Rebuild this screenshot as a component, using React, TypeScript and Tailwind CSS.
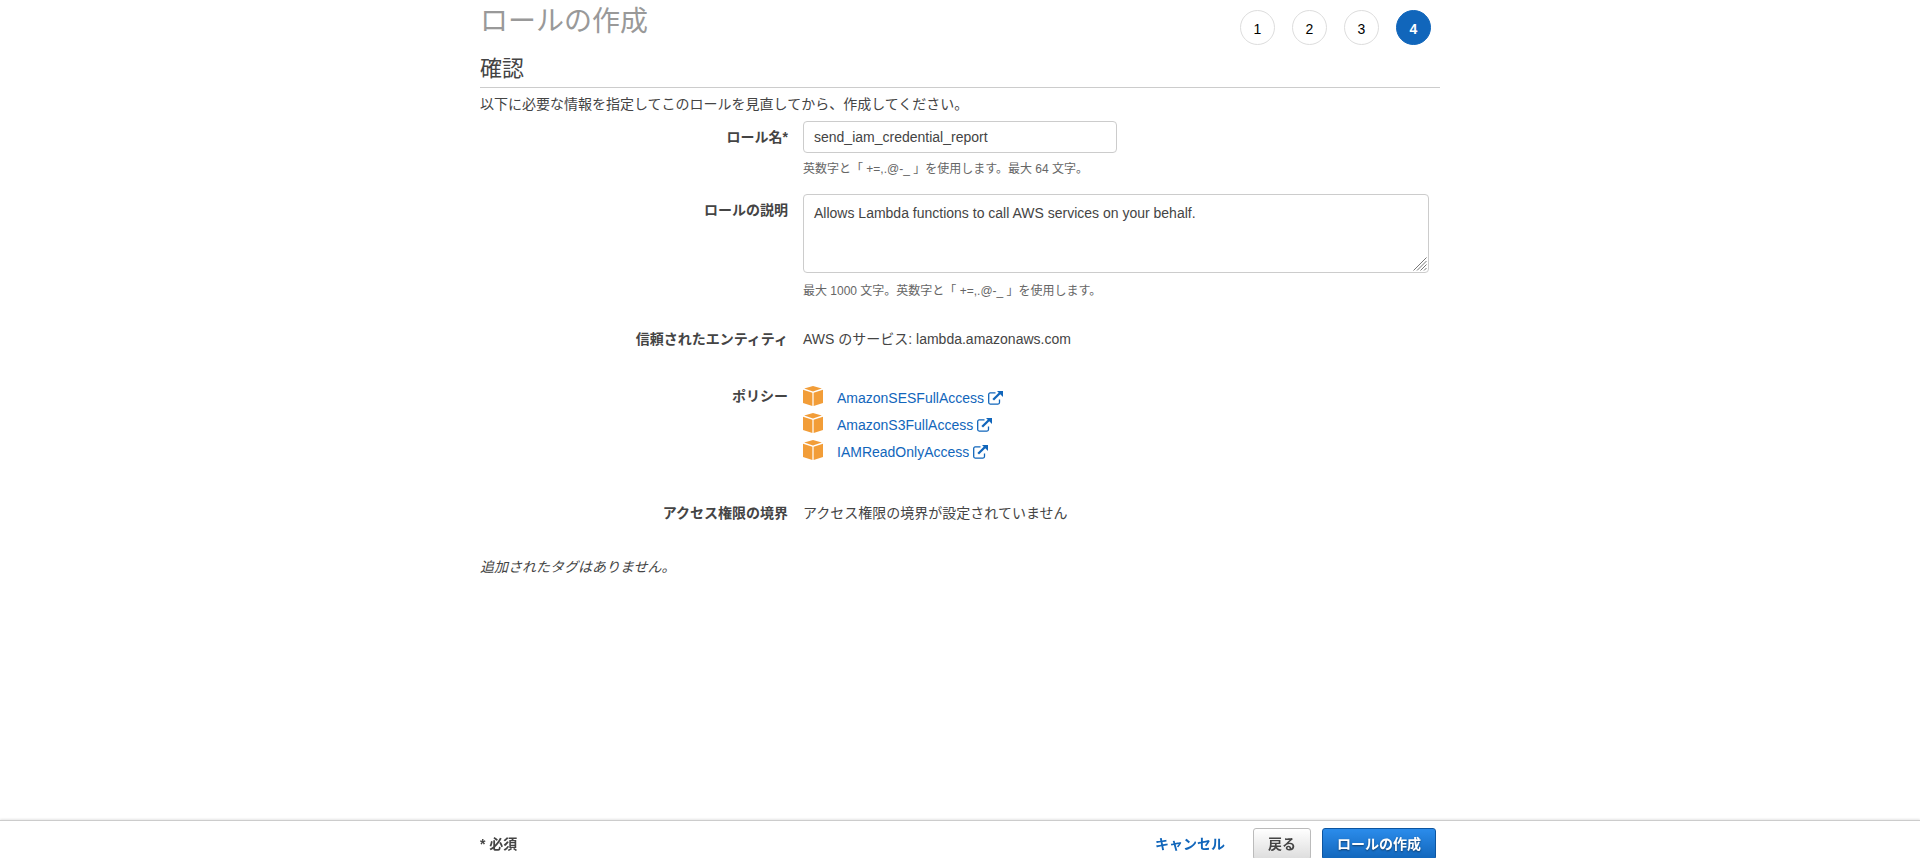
import type { ReactNode } from "react";

interface IPolicy {
  name: string;
}

interface FormRowProps {
  label: string;
  htmlFor?: string;
  tall?: boolean;
  children: ReactNode;
}

const steps = [1, 2, 3, 4];
const currentStep = 4;

const policies: IPolicy[] = [
  { name: "AmazonSESFullAccess" },
  { name: "AmazonS3FullAccess" },
  { name: "IAMReadOnlyAccess" },
];

const CubeIcon = () => (
  <svg viewBox="0 0 20 20" className="h-5 w-5 shrink-0" fill="#f29d38" aria-hidden="true">
    <path d="M10 0 18.8 2.6 10 5.4 1.2 2.6Z" />
    <path d="M0 3.8 9.4 6.8V20L0 17Z" />
    <path d="M20 3.8 10.6 6.8V20L20 17Z" />
  </svg>
);

const ExternalIcon = () => (
  <svg viewBox="0 0 15 14" className="h-[14px] w-[15px] shrink-0" fill="none" aria-hidden="true">
    <path
      d="M7.5 1.9H2.2A1.5 1.5 0 0 0 .7 3.4V11.6A1.5 1.5 0 0 0 2.2 13.1H10A1.5 1.5 0 0 0 11.5 11.6V8.5"
      stroke="#1166bb"
      strokeWidth="1.3"
    />
    <path d="M5.2 8.8 12 2" stroke="#1166bb" strokeWidth="2.3" />
    <path d="M9 0H15V6Z" fill="#1166bb" />
  </svg>
);

const ResizeGrip = () => (
  <svg
    viewBox="0 0 14 14"
    className="pointer-events-none absolute right-[2px] bottom-[2px] h-[14px] w-[14px] bg-white"
    stroke="#777777"
    aria-hidden="true"
  >
    <path d="M.5 13.5 13.5.5M4 13.5 13.5 4M7.5 13.5 13.5 7.5M11 13.5 13.5 11" />
  </svg>
);

const FormRow = ({ label, htmlFor, tall, children }: FormRowProps) => {
  const labelClass = `text-right font-bold ${tall ? "leading-8" : "leading-5"}`;

  return (
    <div className="grid grid-cols-[308px_1fr] gap-x-[15px]">
      {htmlFor ? (
        <label htmlFor={htmlFor} className={labelClass}>{label}</label>
      ) : (
        <div className={labelClass}>{label}</div>
      )}
      <div className="min-w-0">{children}</div>
    </div>
  );
};

const App = () => {
  return (
    <div
      lang="ja"
      className="min-h-screen bg-white pb-10 font-['Liberation_Sans','Noto_Sans_CJK_JP',sans-serif] text-sm leading-5 text-[#444444]"
    >
      <main className="mx-auto max-w-[960px]">
        <header className="flex h-[51px] items-start justify-between">
          <h1 className="text-[28px] leading-[44px] text-[#999999]">ロールの作成</h1>
          <ol className="flex gap-[17px] pt-[10px] pr-[9px]">
            {steps.map((step) => (
              <li
                key={step}
                className={`flex h-[35px] w-[35px] items-center justify-center rounded-full border pt-[2px] ${
                  step === currentStep
                    ? "border-[#1166bb] bg-[#1166bb] font-bold text-white"
                    : "border-[#dddddd] text-black"
                }`}
              >
                {step}
              </li>
            ))}
          </ol>
        </header>

        <h2 className="border-b border-[#cccccc] text-[22px] leading-9">確認</h2>
        <p className="mt-[6px]">以下に必要な情報を指定してこのロールを見直してから、作成してください。</p>

        <form className="mt-[7px]">
          <FormRow label="ロール名*" htmlFor="role-name" tall>
            <input
              id="role-name"
              type="text"
              defaultValue="send_iam_credential_report"
              className="block h-8 w-[314px] rounded border border-[#cccccc] px-[10px]"
            />
            <p className="mt-[6px] text-xs leading-5 text-[#666666]">英数字と「 +=,.@-_ 」を使用します。最大 64 文字。</p>
          </FormRow>

          <div className="mt-[15px]">
            <FormRow label="ロールの説明" htmlFor="role-description" tall>
              <div className="relative mr-[11px]">
                <textarea
                  id="role-description"
                  defaultValue="Allows Lambda functions to call AWS services on your behalf."
                  className="block h-[79px] w-full resize rounded border border-[#cccccc] px-[10px] py-2"
                />
                <ResizeGrip />
              </div>
              <p className="mt-2 text-xs leading-5 text-[#666666]">最大 1000 文字。英数字と「 +=,.@-_ 」を使用します。</p>
            </FormRow>
          </div>

          <div className="mt-7">
            <FormRow label="信頼されたエンティティ">AWS のサービス: lambda.amazonaws.com</FormRow>
          </div>

          <div className="mt-[37px]">
            <FormRow label="ポリシー">
              <ul>
                {policies.map((policy) => (
                  <li key={policy.name} className="flex h-[27px] items-start gap-[14px]">
                    <CubeIcon />
                    <a href="#" className="flex items-center gap-1 pt-[2px] text-[#1166bb]">
                      {policy.name}
                      <ExternalIcon />
                    </a>
                  </li>
                ))}
              </ul>
            </FormRow>
          </div>

          <div className="mt-9">
            <FormRow label="アクセス権限の境界">アクセス権限の境界が設定されていません</FormRow>
          </div>
        </form>

        <p className="mt-[34px] italic">追加されたタグはありません。</p>
      </main>

      <footer className="fixed inset-x-0 bottom-0 h-[38px] overflow-hidden border-t border-[#cccccc] bg-white shadow-[0_-1px_2px_rgba(0,0,0,0.1)]">
        <div className="mx-auto flex max-w-[960px] items-start justify-between pt-[7px] pr-1 font-bold">
          <span className="leading-8">* 必須</span>
          <div className="flex">
            <button type="button" className="mr-7 leading-8 text-[#1166bb]">キャンセル</button>
            <button
              type="button"
              className="mr-[11px] h-8 rounded-[3px] border border-[#bbbbbb] bg-linear-to-b from-white to-[#dddddd] px-[14px]"
            >
              戻る
            </button>
            <button
              type="button"
              className="h-8 rounded-[3px] border border-[#0d55a0] bg-linear-to-b from-[#2b8ceb] to-[#1166bb] px-[14px] text-white text-shadow-[0_1px_2px_rgba(0,0,0,0.5)]"
            >
              ロールの作成
            </button>
          </div>
        </div>
      </footer>
    </div>
  );
};

export default App;
